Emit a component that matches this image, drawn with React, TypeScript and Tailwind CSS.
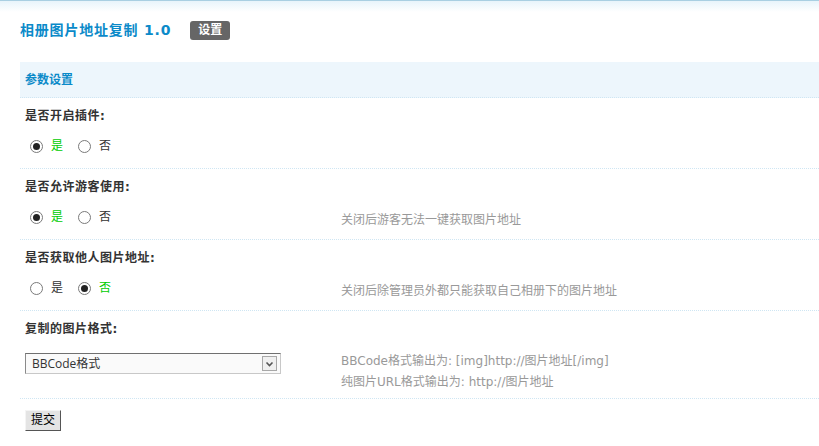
import React from "react";

const cjk = { fontFamily: '"DejaVu Sans", "Noto Sans CJK SC", sans-serif' };

function Radio({ checked, label }: { checked: boolean; label: string }) {
  return (
    <span className="inline-flex items-center">
      <span className="w-[13px] h-[13px] rounded-full border border-[#7a7a7a] bg-white flex items-center justify-center">
        {checked && <span className="w-[7px] h-[7px] rounded-full bg-[#222]" />}
      </span>
      <span className={`ml-[8px] text-[12px] ${checked ? "text-[#00cc00]" : "text-[#333]"}`}>{label}</span>
    </span>
  );
}

function Row({
  label,
  yes,
  help,
}: {
  label: string;
  yes: boolean;
  help?: string;
}) {
  return (
    <div className="border-b border-dotted border-[#cfe6f3] pl-[5px] pt-[8px] pb-[12px]">
      <div className="h-[20px] leading-[20px] text-[12px] font-bold text-[#333] tracking-[0.5px]">{label}</div>
      <div className="mt-[10px] flex h-[20px] items-center">
        <div className="w-[316px] flex items-center gap-[15px] pl-[5px]">
          <Radio checked={yes} label="是" />
          <Radio checked={!yes} label="否" />
        </div>
        {help && <div className="pt-[6px] text-[12px] text-[#999]">{help}</div>}
      </div>
    </div>
  );
}

export default function App() {
  return (
    <div className="w-[819px] h-[446px] bg-white overflow-hidden" style={cjk}>
      <div className="border-t border-[#a9cfe2] h-[12px] bg-gradient-to-b from-[#e8f4fb] to-white" />
      <div className="pl-[20px]">
        <div className="flex items-center h-[32px] mt-[2px]">
          <span className="text-[14px] font-bold text-[#0b8ac9] tracking-[0.8px]">相册图片地址复制 1.0</span>
          <span className="ml-[19px] h-[19px] px-[8px] rounded-[3px] bg-[#666] text-white text-[12px] font-bold leading-[19px]">设置</span>
        </div>
        <div className="mt-[16px] h-[36px] bg-[#edf6fc] border-b border-dotted border-[#cfe6f3] pl-[5px] flex items-center text-[12px] font-bold text-[#0b8ac9]">
          参数设置
        </div>
        <Row label="是否开启插件:" yes={true} />
        <Row label="是否允许游客使用:" yes={true} help="关闭后游客无法一键获取图片地址" />
        <Row label="是否获取他人图片地址:" yes={false} help="关闭后除管理员外都只能获取自己相册下的图片地址" />
        <div className="border-b border-dotted border-[#cfe6f3] pl-[5px] pt-[8px] pb-[5px]">
          <div className="h-[20px] leading-[20px] text-[12px] font-bold text-[#333] tracking-[0.5px]">复制的图片格式:</div>
          <div className="mt-[12px] flex">
            <div className="w-[316px] pt-[2px]">
              <div className="w-[256px] h-[21px] bg-[#fafafa] border border-t-[#707070] border-l-[#8a8a8a] border-b-[#c8c8c8] border-r-[#c8c8c8] flex items-center justify-between pl-[6px] pr-[3px]">
                <span className="text-[12px] text-[#333]" style={{ fontFamily: '"Open Sans", "Noto Sans CJK SC", sans-serif' }}>BBCode格式</span>
                <span className="w-[15px] h-[15px] border border-[#a8a8a8] bg-[#f0f0f0] flex items-center justify-center">
                  <svg width="9" height="6" viewBox="0 0 9 6">
                    <path d="M1.5 1.5 L4.5 4.5 L7.5 1.5" fill="none" stroke="#555" strokeWidth="1.6" />
                  </svg>
                </span>
              </div>
            </div>
            <div className="text-[12px] text-[#999] leading-[21px]">
              <div>BBCode格式输出为: [img]http://图片地址[/img]</div>
              <div>纯图片URL格式输出为: http://图片地址</div>
            </div>
          </div>
        </div>
        <div className="pl-[5px] pt-[8px]">
          <button className="h-[21px] px-[5px] bg-[#e4e4e4] border border-t-[#f4f4f4] border-l-[#f4f4f4] border-b-[#555] border-r-[#555] text-[12px] text-black leading-[18px]">
            提交
          </button>
        </div>
      </div>
    </div>
  );
}
